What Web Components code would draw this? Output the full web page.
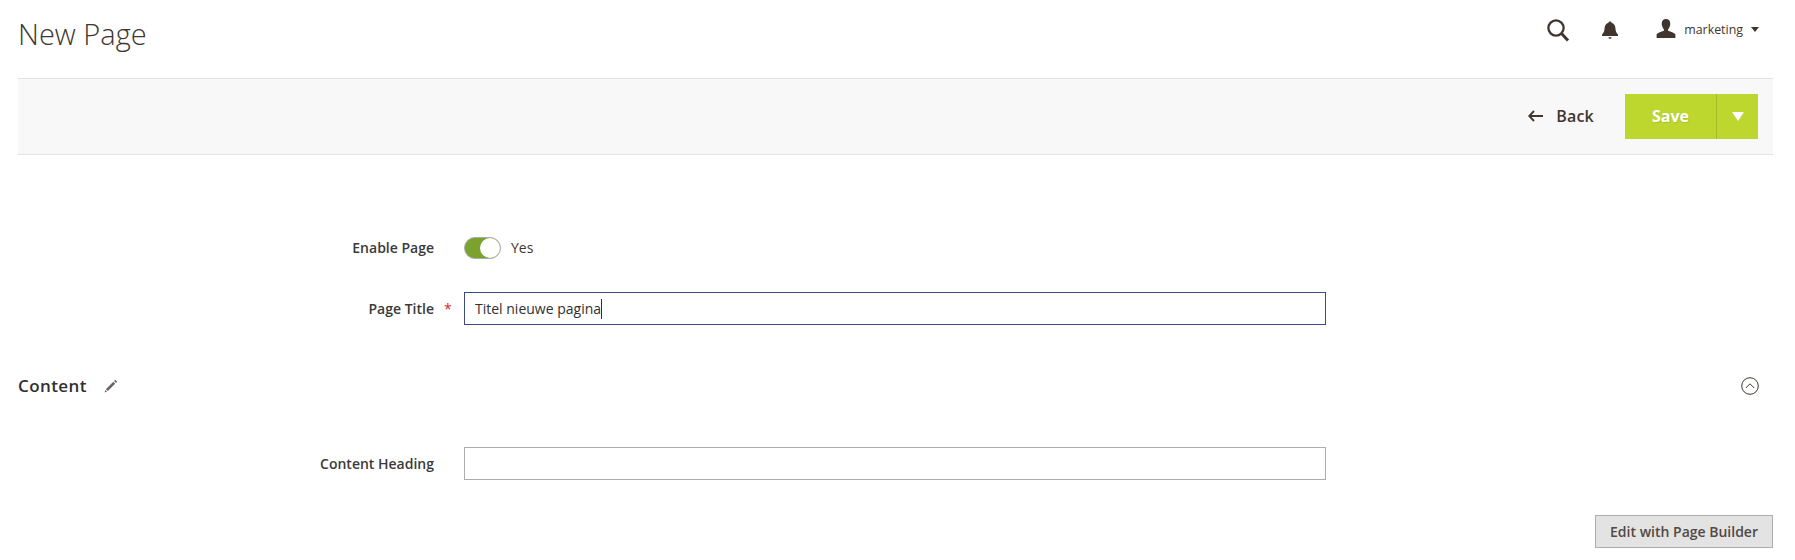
<!DOCTYPE html>
<html><head><meta charset="utf-8">
<style>
html,body{margin:0;padding:0;background:#fff}
body{font-family:"Open Sans",sans-serif;color:#303030;width:1795px;height:560px;overflow:hidden}
</style></head><body>
<admin-page>
  <page-header title-text="New Page" user="marketing"></page-header>
  <action-bar></action-bar>
  <form-row label="Enable Page" style="margin-top:82px"><toggle-switch>Yes</toggle-switch></form-row>
  <form-row label="Page Title" required style="margin-top:33px"><text-field value="Titel nieuwe pagina" focused></text-field></form-row>
  <section-head style="margin-top:41px">Content</section-head>
  <form-row label="Content Heading" style="margin-top:41px"><text-field></text-field></form-row>
  <builder-row>Edit with Page Builder</builder-row>
</admin-page>
<script>
function def(name,css,html){
  customElements.define(name,class extends HTMLElement{
    connectedCallback(){
      if(this.shadowRoot)return;
      const r=this.attachShadow({mode:'open'});
      r.innerHTML='<style>'+css+'</style>'+(typeof html==='function'?html(this):html);
    }
  });
}
def('admin-page',':host{display:block;padding:0 22px 0 18px}','<slot></slot>');
def('page-header',`:host{display:flex;align-items:flex-start;height:78px;justify-content:space-between}
h1{margin:14px 0 0;font:300 29px/40px "Open Sans",sans-serif;color:#41362f}
.r{display:flex;align-items:center;height:58px;margin-right:14px}
.s{margin-right:31px;display:block;position:relative;top:1px}.b{margin-right:37px;display:block;position:relative;top:1px}.u{display:block;margin-right:8px}
.n{font-size:12.400px;color:#41362f;margin-right:8px}
.c{width:0;height:0;border:4.500px solid transparent;border-top:5px solid #41362f;border-bottom:0}`,
h=>`<h1>${h.getAttribute('title-text')}</h1><div class="r">
<svg class="s" width="24" height="24" viewBox="0 0 24 24"><circle cx="10" cy="10" r="7.600" fill="none" stroke="#41362f" stroke-width="2.300"/><path d="M15.500 15.500L22 22.500" stroke="#41362f" stroke-width="3" fill="none"/></svg>
<svg class="b" width="18" height="20" viewBox="0 0 18 20"><path fill="#41362f" d="M9 1.500c.9 0 1.400.5 1.500 1.200C13 3.400 14.300 5.400 14.400 8c.1 3 .9 5 2.600 6.600V16H1v-1.400C2.700 13 3.500 11 3.600 8 3.700 5.400 5 3.400 7.500 2.700 7.600 2 8.100 1.500 9 1.500z"/><path fill="#41362f" d="M7.500 17.200h3c0 1-.6 1.600-1.500 1.600s-1.500-.6-1.500-1.600z"/></svg>
<svg class="u" width="20" height="20" viewBox="0 0 20 20"><path fill="#41362f" d="M10 0c2.700 0 4.300 2 4.300 4.800 0 2.200-1 4.300-2.200 5.400v1.600c2.800.9 6 2 7.300 3.500V19H.6v-3.700c1.300-1.500 4.500-2.600 7.300-3.500v-1.600C6.700 9.100 5.700 7 5.700 4.800 5.700 2 7.300 0 10 0z"/></svg>
<span class="n">${h.getAttribute('user')}</span><span class="c"></span></div>`);
def('action-bar',`:host{display:flex;box-sizing:border-box;height:77px;background:#f8f8f8;border-top:1px solid #e3e3e3;border-bottom:1px solid #e3e3e3;align-items:center;justify-content:flex-end;padding:0 15px 0 0}
.k{display:flex;align-items:center;font:600 16px/24px "Open Sans",sans-serif;color:#41362f;margin-right:31px;letter-spacing:.2px;margin-top:-2px}
svg{margin-right:13px;display:block}
.g{display:flex;height:45px;background:#bed72e;color:#fff}
.m{width:91px;display:flex;align-items:center;justify-content:center;font:700 16px/24px "Open Sans",sans-serif;text-shadow:1px 1px 1px rgba(0,0,0,.1);padding-bottom:2px;box-sizing:border-box}
.d{width:41px;border-left:1px solid #a4ba26;display:flex;align-items:center;justify-content:center}
.t{width:0;height:0;border:6.500px solid transparent;border-top:9px solid #fff;border-bottom:0}`,
`<div class="k"><svg width="15" height="12" viewBox="0 0 15 12"><path d="M6 1L1.200 6 6 11M1.500 6H15" fill="none" stroke="#41362f" stroke-width="1.900"/></svg>Back</div>
<div class="g"><div class="m">Save</div><div class="d"><span class="t"></span></div></div>`);
def('form-row',`:host{display:flex;align-items:center}
.l{box-sizing:border-box;width:422px;padding-right:6px;text-align:right;font:600 14px/20px "Open Sans",sans-serif;color:#3a3a3a;flex:none}
.w{width:24px;flex:none;text-align:left;font:400 14px/20px "Open Sans",sans-serif;color:#e22626;padding-left:4px;box-sizing:border-box}`,
h=>`<div class="l">${h.getAttribute('label')}</div><div class="w">${h.hasAttribute('required')?'*':''}</div><slot></slot>`);
def('toggle-switch',`:host{display:flex;align-items:center;font:400 14px/20px "Open Sans",sans-serif;color:#41362f}
.t{box-sizing:border-box;width:37px;height:22px;border-radius:11px;background:#79a22e;position:relative;margin-right:10px;border:1px solid #aaa}
.t::after{content:"";position:absolute;right:0;top:0;width:20px;height:20px;border-radius:50%;background:#fff}`,
`<span class="t"></span><slot></slot>`);
def('text-field',`:host{display:block;width:862px}
.f{box-sizing:border-box;height:33px;border:1px solid #adadad;display:flex;align-items:center;padding:0 10px;font:400 14px/20px "Open Sans",sans-serif;color:#303030;background:#fff}
:host([focused]) .f{border-color:#3a4c86}
i{display:inline-block;width:1px;height:20px;background:#303030;vertical-align:top}`,
h=>`<div class="f"><span>${h.getAttribute('value')||''}${h.hasAttribute('focused')?'<i></i>':''}</span></div>`);
def('section-head',`:host{display:flex;align-items:center;height:40px;position:relative}
.x{font:600 17px/24px "Open Sans",sans-serif;color:#303030;letter-spacing:.4px}
svg{display:block}.p{margin-left:17px}.v{margin-left:auto;margin-right:14px}`,
`<span class="x"><slot></slot></span>
<svg class="p" width="14" height="14" viewBox="0 0 14 14"><path fill="#6b6360" d="M11.300 .8l1.900 1.900-1.200 1.200-1.900-1.900zM9.300 2.800l1.900 1.900-7.400 7.400-1.900-1.900zM1.400 11l1.600 1.600-2.400.8z"/></svg>
<svg class="v" width="18" height="18" viewBox="0 0 18 18"><circle cx="9" cy="9" r="8.300" fill="none" stroke="#41362f" stroke-width="1"/><path d="M4.800 11l4.200-4.200 4.200 4.200" fill="none" stroke="#41362f" stroke-width="1"/></svg>`);
def('builder-row',`:host{display:flex;justify-content:flex-end;margin-top:35px}
.b{box-sizing:border-box;width:178px;height:33px;background:#e3e3e3;border:1px solid #adadad;display:flex;align-items:center;justify-content:center;font:600 14px/20px "Open Sans",sans-serif;color:#514943}`,
`<div class="b"><slot></slot></div>`);
</script>
</body></html>
